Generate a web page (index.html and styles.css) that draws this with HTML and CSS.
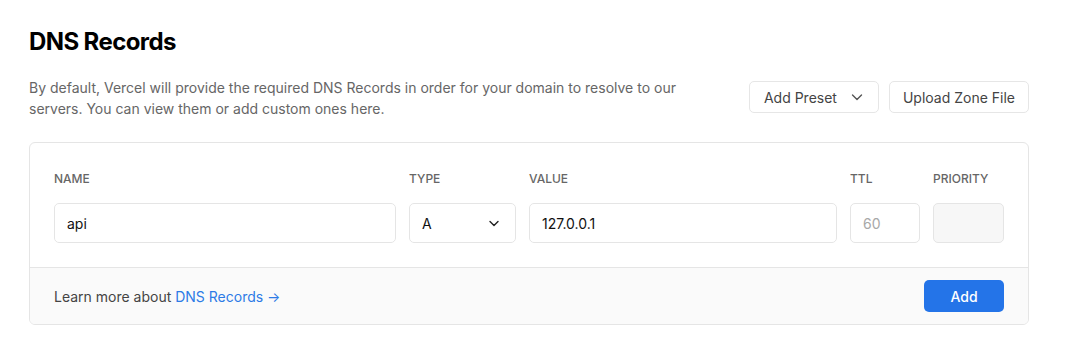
FILE: index.html
```html
<!DOCTYPE html>
<html lang="en">
<head>
    <meta charset="UTF-8">
    <meta name="viewport" content="width=device-width, initial-scale=1.0">
    <title>DNS Records</title>
    <link rel="stylesheet" href="styles.css">
</head>
<body>
    <div class="container">
        <h1 class="title">DNS Records</h1>
        <div class="intro">
            <p class="desc">By default, Vercel will provide the required DNS Records in order for your domain to resolve to our servers. You can view them or add custom ones here.</p>
            <div class="actions">
                <button class="btn btn-preset">Add Preset
                    <svg width="14" height="14" viewBox="0 0 14 14"><path d="M2.5 5 L7 9.5 L11.5 5" fill="none" stroke="#555" stroke-width="1.4" stroke-linecap="round" stroke-linejoin="round"/></svg>
                </button>
                <button class="btn">Upload Zone File</button>
            </div>
        </div>

        <div class="card">
            <div class="form">
                <label class="label">Name</label>
                <label class="label">Type</label>
                <label class="label">Value</label>
                <label class="label">TTL</label>
                <label class="label">Priority</label>

                <div class="field">api</div>
                <div class="field select">A
                    <svg width="14" height="14" viewBox="0 0 14 14"><path d="M3 5.5 L7 9.5 L11 5.5" fill="none" stroke="#222" stroke-width="1.4" stroke-linecap="round" stroke-linejoin="round"/></svg>
                </div>
                <div class="field">127.0.0.1</div>
                <div class="field placeholder">60</div>
                <div class="field disabled"></div>
            </div>
            <div class="footer">
                <span class="note">Learn more about <a href="#" class="link">DNS Records →</a></span>
                <button class="add-btn">Add</button>
            </div>
        </div>
    </div>
</body>
</html>
```
FILE: styles.css
```css
body {
    font-family: Inter, "Noto Sans", Arial, sans-serif;
    background-color: #ffffff;
    margin: 0;
    padding: 0;
    color: #111;
}

.container {
    width: 1000px;
    padding: 26px 0 0 29px;
}

.title {
    font-size: 24px;
    line-height: 32px;
    font-weight: 700;
    letter-spacing: -0.6px;
    margin: 0 0 19px 0;
    color: #000;
}

.intro {
    display: flex;
    justify-content: space-between;
    align-items: flex-start;
    margin-bottom: 23px;
}

.desc {
    margin: 0;
    width: 660px;
    font-size: 14px;
    line-height: 21px;
    color: #666;
}

.actions {
    display: flex;
    gap: 10px;
    margin-top: 4px;
}

.btn {
    display: flex;
    align-items: center;
    gap: 13px;
    height: 32px;
    padding: 0 13px;
    border: 1px solid #e6e6e6;
    border-radius: 5px;
    background-color: #fff;
    font-family: inherit;
    font-size: 14px;
    font-weight: 400;
    color: #444;
}

.btn-preset {
    padding: 0 14px 0 14px;
}

.card {
    border: 1px solid #e5e5e5;
    border-radius: 6px;
    overflow: hidden;
}

.form {
    display: grid;
    grid-template-columns: 342px 107px 1fr 70px 71px;
    column-gap: 13px;
    row-gap: 16px;
    padding: 28px 24px 24px 24px;
}

.label {
    font-size: 12px;
    line-height: 16px;
    font-weight: 500;
    text-transform: uppercase;
    color: #666;
}

.field {
    display: flex;
    align-items: center;
    justify-content: space-between;
    height: 40px;
    box-sizing: border-box;
    padding: 0 12px;
    border: 1px solid #e5e5e5;
    border-radius: 5px;
    font-size: 14px;
    color: #111;
}

.select {
    padding-right: 14px;
}

.placeholder {
    color: #a8a8a8;
}

.disabled {
    background-color: #f7f7f7;
}

.footer {
    display: flex;
    justify-content: space-between;
    align-items: center;
    padding: 12px 24px;
    background-color: #fafafa;
    border-top: 1px solid #e5e5e5;
}

.note {
    font-size: 14px;
    color: #444;
}

.link {
    color: #2d7be6;
    text-decoration: none;
}

.add-btn {
    width: 80px;
    height: 32px;
    border: none;
    border-radius: 5px;
    background-color: #2474e8;
    color: #fff;
    font-family: inherit;
    font-size: 14px;
    font-weight: 500;
}
```
